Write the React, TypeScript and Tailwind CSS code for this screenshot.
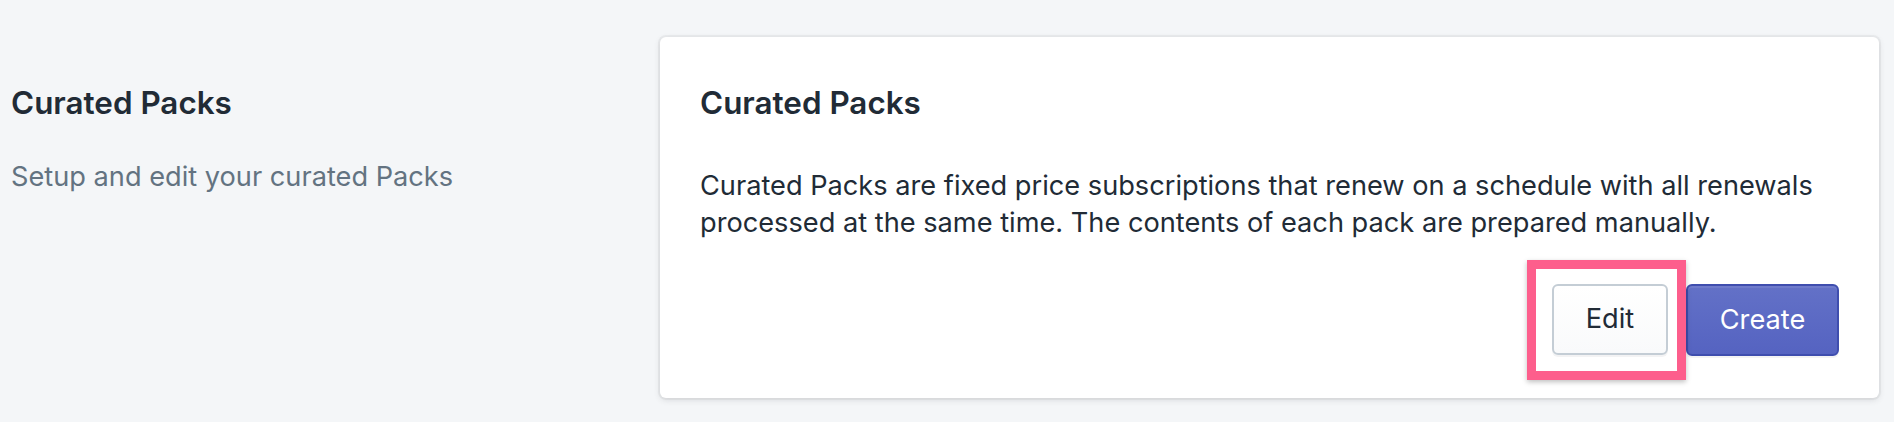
import React from "react";

export default function App() {
  return (
    <div
      className="flex min-h-[422px] w-full bg-[#f4f6f8] pt-[37px] text-[#212b36]"
      style={{ fontFamily: "Inter, 'Noto Sans', sans-serif" }}
    >
      {/* section description */}
      <div className="w-[660px] shrink-0 pl-[11px] pt-[48px]">
        <h2 className="text-[31.4px] font-semibold leading-[36px]">
          Curated Packs
        </h2>
        <p className="mt-[37px] text-[27.2px] leading-[38px] text-[#637381]">
          Setup and edit your curated Packs
        </p>
      </div>

      {/* card */}
      <div className="h-[361px] w-[1219px] shrink-0 rounded-[6px] bg-white px-10 pt-[48px] shadow-[0_0_0_2px_rgba(63,63,68,0.05),0_2px_6px_0_rgba(63,63,68,0.15)]">
        <h3 className="text-[31.4px] font-semibold leading-[36px]">
          Curated Packs
        </h3>
        <p className="mt-[46px] text-[27.2px] leading-[37px]">
          Curated Packs are fixed price subscriptions that renew on a schedule
          with all renewals processed at the same time. The contents of each
          pack are prepared manually.
        </p>

        <div className="mt-[43px] flex justify-end gap-[18px]">
          <div className="relative">
            <button className="h-[71px] w-[116px] rounded-[6px] border-2 border-[#c4cdd5] bg-gradient-to-b from-white to-[#f9fafb] text-[27.2px] text-[#212b36] shadow-[0_2px_0_0_rgba(22,29,37,0.05)]">
              Edit
            </button>
            {/* annotation highlight */}
            <div className="pointer-events-none absolute -left-[25px] -right-[18px] -top-[24px] -bottom-[24px] border-[9px] border-[#fd5e8c] shadow-[0_2px_5px_rgba(0,0,0,0.25)]" />
          </div>
          <button className="h-[72px] w-[153px] rounded-[6px] border-2 border-[#3f4eae] bg-gradient-to-b from-[#6371c7] to-[#5563c1] text-[27.2px] text-white shadow-[inset_0_2px_0_0_#6f7bcb,0_2px_0_0_rgba(22,29,37,0.05)]">
            Create
          </button>
        </div>
      </div>
    </div>
  );
}
